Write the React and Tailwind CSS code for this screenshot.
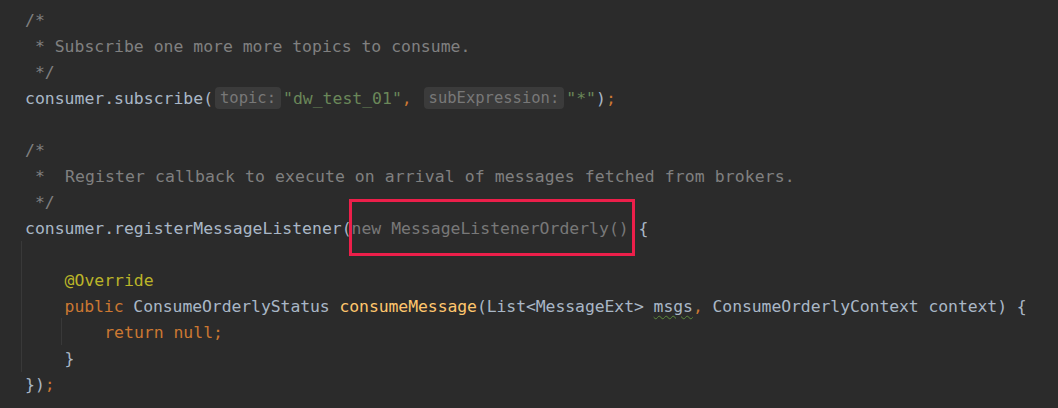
const C = {
  text: 'text-[#a9b7c6]',
  comment: 'text-[#808080]',
  str: 'text-[#6a8759]',
  kw: 'text-[#cc7832]',
  ann: 'text-[#bbb529]',
  fn: 'text-[#ffc66d]',
  dim: 'text-[#787878]',
};

function Hint({ children }) {
  return (
    <span className="inline-block rounded-[4px] bg-[#3b3b3b] px-[5px] mx-[2px] text-[15.5px] leading-[22px] text-[#787878] align-[1px]">
      {children}
    </span>
  );
}

function Line({ children, indent = 0, className = '' }) {
  return (
    <div className={`h-[26px] leading-[26px] whitespace-pre ${className}`} style={{ paddingLeft: 25 + indent * 39.6 }}>
      {children}
    </div>
  );
}

export default function App() {
  return (
    <div
      className="relative w-[1058px] h-[408px] overflow-hidden bg-[#2b2b2b] pt-[8px] text-[16.45px] text-[#a9b7c6]"
      style={{ fontFamily: '"DejaVu Sans Mono", "Liberation Mono", monospace' }}
    >
      <Line><span className={C.comment}>/*</span></Line>
      <Line><span className={C.comment}> * Subscribe one more more topics to consume.</span></Line>
      <Line><span className={C.comment}> */</span></Line>
      <Line>
        consumer.subscribe(<Hint>topic:</Hint><span className={C.str}>"dw_test_01"</span><span className={C.kw}>,</span> <Hint>subExpression:</Hint><span className={C.str}>"*"</span>)<span className={C.kw}>;</span>
      </Line>
      <Line> </Line>
      <Line><span className={C.comment}>/*</span></Line>
      <Line className="tracking-[0.1px]"><span className={C.comment}> *  Register callback to execute on arrival of messages fetched from brokers.</span></Line>
      <Line><span className={C.comment}> */</span></Line>
      <Line>
        consumer.registerMessageListener(<span className={C.dim}>new MessageListenerOrderly()</span> {'{'}
      </Line>
      <Line> </Line>
      <Line indent={1}><span className={C.ann}>@Override</span></Line>
      <Line indent={1} className="tracking-[-0.08px]">
        <span className={C.kw}>public</span> ConsumeOrderlyStatus <span className={C.fn}>consumeMessage</span>(List&lt;MessageExt&gt; <span className="underline decoration-wavy decoration-[#5d8a3c] decoration-1 underline-offset-[3px]">msgs</span><span className={C.kw}>,</span> ConsumeOrderlyContext context) {'{'}
      </Line>
      <Line indent={2}><span className={C.kw}>return null;</span></Line>
      <Line indent={1}>{'}'}</Line>
      <Line>{'}'})<span className={C.kw}>;</span></Line>

      <div className="absolute left-[21px] top-[241px] h-[131px] w-px bg-[#393939]" />
      <div className="absolute left-[61px] top-[318px] h-[27px] w-px bg-[#393939]" />
      <div className="absolute left-[349px] top-[199px] w-[286px] h-[57px] border-[3px] border-[#ec1f4a]" />
    </div>
  );
}
